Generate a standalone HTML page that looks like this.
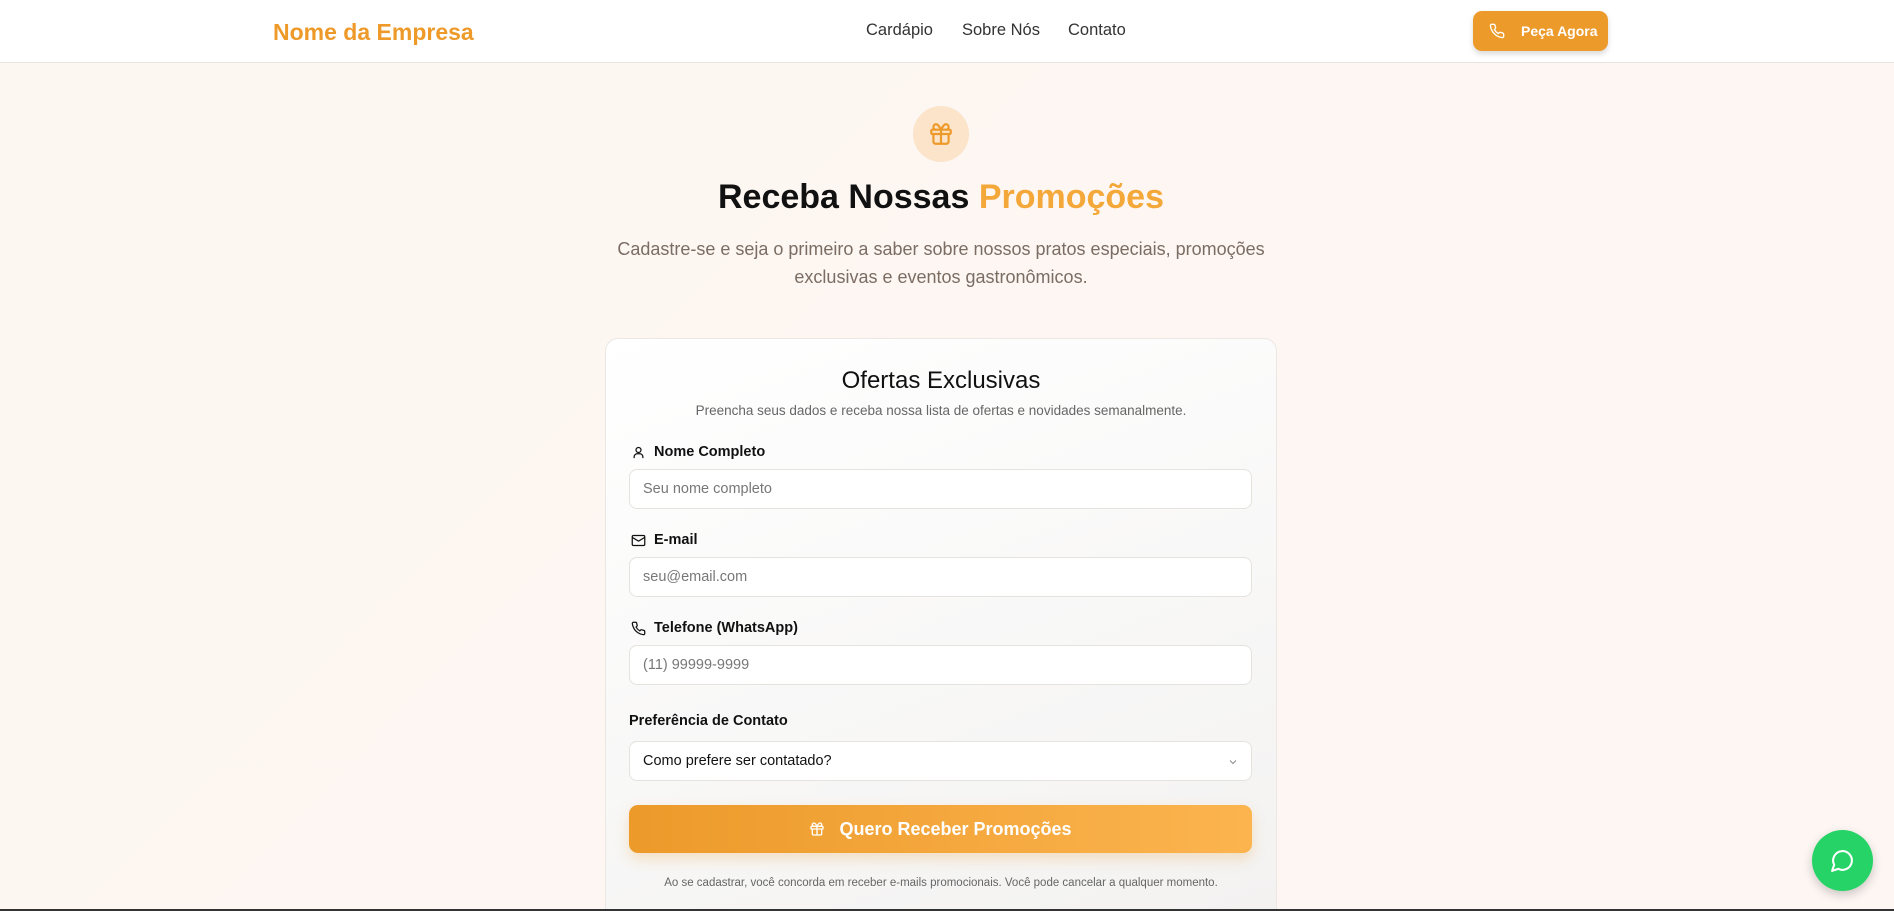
<!DOCTYPE html>
<html style="width:1894px;height:911px;overflow:hidden"><head><meta charset="utf-8"><style>
*{box-sizing:border-box;margin:0;padding:0}
body{width:1894px;height:911px;overflow:hidden;font-family:"Liberation Sans",sans-serif;background:linear-gradient(135deg,#fdf7f1,#fdf6f3);position:relative;color:#111}
.hdr{position:absolute;left:0;top:0;width:1894px;height:63px;background:#fff;border-bottom:1px solid #e8e4e0}
.logo{position:absolute;left:273px;top:19px;font-size:23px;font-weight:bold;color:#ee9a2a}
.nav{position:absolute;top:21px;font-size:16.5px;color:#333}
.btn{position:absolute;left:1473px;top:11px;width:135px;height:40px;border-radius:9px;background:#ec9a2a;color:#fff;font-weight:bold;font-size:14px;box-shadow:0 3px 6px rgba(0,0,0,.15)}
.abs{position:absolute}
.circle{left:913px;top:106px;width:56px;height:56px;border-radius:50%;background:#fbe4c9}
h1{position:absolute;left:0;width:1882px;top:178px;text-align:center;font-size:34px;font-weight:bold}
.sub{position:absolute;left:0;width:1882px;top:235px;text-align:center;font-size:18px;line-height:28px;color:#7b6d64}
.card{left:605px;top:338px;width:672px;height:573px;border:1px solid #ebe7e3;border-bottom:none;border-radius:13px 13px 0 0;background:linear-gradient(160deg,#fff,#f3f2f1)}
.ctr{position:absolute;left:605px;width:672px;text-align:center}
.lbl{position:absolute;left:631px;font-size:14.5px;font-weight:bold;color:#111;display:flex;align-items:center;gap:8px}
.inp{position:absolute;left:629px;width:623px;height:40px;border:1px solid #e6e2de;border-radius:8px;background:#fff;font-size:14.5px;color:#777;padding:11px 13px}
.sbtn{left:629px;top:805px;width:623px;height:48px;border-radius:9px;background:linear-gradient(90deg,#ec9a2a,#fcb44f);box-shadow:0 6px 14px rgba(236,154,42,.25);color:#fff;font-size:18px;font-weight:bold;display:flex;align-items:center;justify-content:center;gap:14px}
</style></head><body>
<div class="hdr">
<div class="logo">Nome da Empresa</div>
<div class="nav" style="left:866px">Cardápio</div>
<div class="nav" style="left:962px">Sobre Nós</div>
<div class="nav" style="left:1068px">Contato</div>
<div class="btn"><svg class="abs" style="left:16px;top:12px" width="16" height="16" viewBox="0 0 24 24" fill="none" stroke="#fff" stroke-width="2" stroke-linecap="round" stroke-linejoin="round"><path d="M22 16.9v3a2 2 0 0 1-2.2 2 19.8 19.8 0 0 1-8.6-3.1 19.5 19.5 0 0 1-6-6A19.8 19.8 0 0 1 2.1 4.2 2 2 0 0 1 4.1 2h3a2 2 0 0 1 2 1.7c.1.9.4 1.8.7 2.7a2 2 0 0 1-.5 2.1L8.1 9.8a16 16 0 0 0 6 6l1.3-1.3a2 2 0 0 1 2.1-.4c.9.3 1.8.6 2.7.7a2 2 0 0 1 1.7 2z"/></svg><span class="abs" style="left:48px;top:12px">Peça Agora</span></div>
</div>
<div class="abs circle"><svg class="abs" style="left:15px;top:15px" width="26" height="26" viewBox="0 0 24 24" fill="none" stroke="#ee9a2a" stroke-width="2" stroke-linecap="round" stroke-linejoin="round"><rect x="3" y="8" width="18" height="4" rx="1"/><path d="M12 8v13"/><path d="M19 12v7a2 2 0 0 1-2 2H7a2 2 0 0 1-2-2v-7"/><path d="M7.5 8a2.5 2.5 0 0 1 0-5C9.5 3 12 8 12 8s2.5-5 4.5-5a2.5 2.5 0 0 1 0 5"/></svg></div>
<h1>Receba Nossas <span style="color:#f5a83a">Promoções</span></h1>
<div class="sub">Cadastre-se e seja o primeiro a saber sobre nossos pratos especiais, promoções<br>exclusivas e eventos gastronômicos.</div>
<div class="abs card"></div>
<div class="ctr" style="top:367px;font-size:24px">Ofertas Exclusivas</div>
<div class="ctr" style="top:403px;font-size:13.5px;color:#666">Preencha seus dados e receba nossa lista de ofertas e novidades semanalmente.</div>
<div class="lbl" style="top:444px"><svg width="15" height="15" viewBox="0 0 24 24" fill="none" stroke="#111" stroke-width="2"><circle cx="12" cy="8" r="4"/><path d="M5 21v-2a5 5 0 0 1 5-5h4a5 5 0 0 1 5 5v2"/></svg>Nome Completo</div>
<div class="inp" style="top:469px">Seu nome completo</div>
<div class="lbl" style="top:532px"><svg width="15" height="15" viewBox="0 0 24 24" fill="none" stroke="#111" stroke-width="2"><rect x="2" y="4" width="20" height="16" rx="2"/><path d="m22 7-10 6L2 7"/></svg>E-mail</div>
<div class="inp" style="top:557px">seu@email.com</div>
<div class="lbl" style="top:620px"><svg width="15" height="15" viewBox="0 0 24 24" fill="none" stroke="#111" stroke-width="2"><path d="M22 16.9v3a2 2 0 0 1-2.2 2 19.8 19.8 0 0 1-8.6-3.1 19.5 19.5 0 0 1-6-6A19.8 19.8 0 0 1 2.1 4.2 2 2 0 0 1 4.1 2h3a2 2 0 0 1 2 1.7c.1.9.4 1.8.7 2.7a2 2 0 0 1-.5 2.1L8.1 9.8a16 16 0 0 0 6 6l1.3-1.3a2 2 0 0 1 2.1-.4c.9.3 1.8.6 2.7.7a2 2 0 0 1 1.7 2z"/></svg>Telefone (WhatsApp)</div>
<div class="inp" style="top:645px">(11) 99999-9999</div>
<div class="lbl" style="top:713px;left:629px">Preferência de Contato</div>
<div class="inp" style="top:741px;color:#111">Como prefere ser contatado?<svg class="abs" style="right:12px;top:14px" width="12" height="12" viewBox="0 0 24 24" fill="none" stroke="#888" stroke-width="2"><path d="m6 9 6 6 6-6"/></svg></div>
<div class="abs sbtn"><svg width="16" height="16" viewBox="0 0 24 24" fill="none" stroke="#fff" stroke-width="2" stroke-linecap="round" stroke-linejoin="round"><rect x="3" y="8" width="18" height="4" rx="1"/><path d="M12 8v13"/><path d="M19 12v7a2 2 0 0 1-2 2H7a2 2 0 0 1-2-2v-7"/><path d="M7.5 8a2.5 2.5 0 0 1 0-5C9.5 3 12 8 12 8s2.5-5 4.5-5a2.5 2.5 0 0 1 0 5"/></svg><span>Quero Receber Promoções</span></div>
<div class="ctr" style="top:877px;font-size:11.5px;color:#666">Ao se cadastrar, você concorda em receber e-mails promocionais. Você pode cancelar a qualquer momento.</div>
<div class="abs" style="left:1812px;top:830px;width:61px;height:61px;border-radius:50%;background:#25d366;box-shadow:0 4px 10px rgba(0,0,0,.2)"><svg class="abs" style="left:18px;top:18px" width="25" height="25" viewBox="0 0 24 24" fill="none" stroke="#fff" stroke-width="2" stroke-linecap="round" stroke-linejoin="round"><path d="M7.9 20A9 9 0 1 0 4 16.1L2 22z"/></svg></div>
<div class="abs" style="left:0;top:909px;width:1894px;height:2px;background:#333"></div>
</body></html>
